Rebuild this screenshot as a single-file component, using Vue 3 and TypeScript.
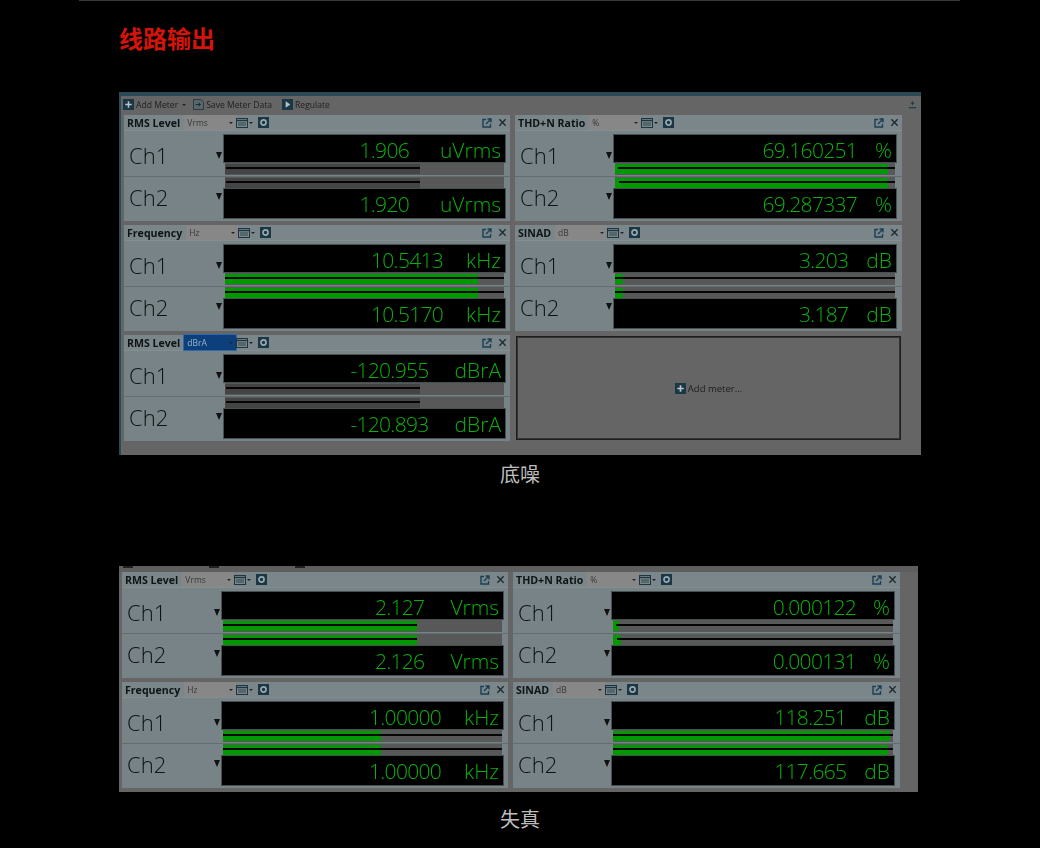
<script setup lang="ts">
interface Bar { fill: number; line: number; start: number; dim?: boolean }
interface Row { name: string; value: string; bar: Bar }
interface Meter { title: string; unit: string; sel: string; gap: number; active?: boolean; rows: [Row, Row] }

const row = (name: string, value: string, fill: number, line: number, start = 0, dim = false): Row => ({
  name, value, bar: { fill, line, start, dim },
})

const noise: Meter[] = [
  { title: 'RMS Level', unit: 'uVrms', sel: 'Vrms', gap: 31, rows: [row('Ch1', '1.906', 70, 70, 1, true), row('Ch2', '1.920', 70, 70, 1, true)] },
  { title: 'THD+N Ratio', unit: '%', sel: '%', gap: 18, rows: [row('Ch1', '69.160251', 97.5, 100, 3), row('Ch2', '69.287337', 97.5, 100, 4)] },
  { title: 'Frequency', unit: 'kHz', sel: 'Hz', gap: 23, rows: [row('Ch1', '10.5413', 90.7, 100), row('Ch2', '10.5170', 90.7, 100)] },
  { title: 'SINAD', unit: 'dB', sel: 'dB', gap: 18, rows: [row('Ch1', '3.203', 3, 100), row('Ch2', '3.187', 3, 100)] },
  { title: 'RMS Level', unit: 'dBrA', sel: 'dBrA', gap: 26, active: true, rows: [row('Ch1', '-120.955', 70, 70, 1, true), row('Ch2', '-120.893', 70, 70, 1, true)] },
]
const dist: Meter[] = [
  { title: 'RMS Level', unit: 'Vrms', sel: 'Vrms', gap: 26, rows: [row('Ch1', '2.127', 69.7, 69.7), row('Ch2', '2.126', 69.7, 69.7)] },
  { title: 'THD+N Ratio', unit: '%', sel: '%', gap: 17, rows: [row('Ch1', '0.000122', 2, 100, 3), row('Ch2', '0.000131', 3, 100, 4)] },
  { title: 'Frequency', unit: 'kHz', sel: 'Hz', gap: 23, rows: [row('Ch1', '1.00000', 56.6, 100), row('Ch2', '1.00000', 56.6, 100)] },
  { title: 'SINAD', unit: 'dB', sel: 'dB', gap: 18, rows: [row('Ch1', '118.251', 98.9, 100), row('Ch2', '117.665', 98.3, 100)] },
]
const groups = [
  { id: 'noise', meters: noise, caption: '底噪', add: true },
  { id: 'dist', meters: dist, caption: '失真', add: false },
]
</script>

<template>
  <div class="page">
    <div class="rule"></div>
    <h1 class="title">线路输出</h1>
    <section v-for="g in groups" :key="g.id" class="group" :class="g.id">
      <div class="shot">
        <div v-if="g.add" class="toolbar">
          <svg class="tb-ico" viewBox="0 0 12 12"><rect width="12" height="12" fill="#1b3746"/><path d="M6 2.500v7M2.500 6h7" stroke="#b9c4c8" stroke-width="1.600"/></svg>
          <span>Add Meter</span><i class="caret"></i>
          <svg class="tb-ico save" viewBox="0 0 12 12"><path d="M.5.5h8l3 3v8H.5z" fill="#59676b" stroke="#23343d"/><path d="M3 6h5M6 4l2 2-2 2" stroke="#10242e" fill="none"/></svg>
          <span>Save Meter Data</span>
          <svg class="tb-ico play" viewBox="0 0 12 12"><rect width="12" height="12" fill="#1b3746"/><path d="M4 2.500l5 3.500-5 3.500z" fill="#b9c4c8"/></svg>
          <span>Regulate</span>
          <svg class="tb-ico dl" viewBox="0 0 10 10"><path d="M5 1.500v4M3 3.500h4M1 8.500h8" stroke="#1f3c4c" stroke-width="1.200"/></svg>
        </div>
        <div v-else class="crop"><i></i><i></i><i></i></div>
        <div class="grid">
          <article v-for="(m, mi) in g.meters" :key="mi" class="meter">
            <header class="head">
              <b>{{ m.title }}</b>
              <span class="sel" :class="{ on: m.active }"><em>{{ m.sel }}</em><i class="caret"></i></span>
              <svg class="rom" viewBox="0 0 12 10"><rect x=".5" y=".5" width="11" height="9" fill="#7a8789" stroke="#1c3540"/><path d="M.5 2.500h11" stroke="#1c3540" stroke-width="1.400"/><path d="M2 5h8M2 7h8" stroke="#2f4650"/></svg>
              <i class="caret small"></i>
              <svg class="gear" viewBox="0 0 12 12"><rect width="12" height="12" fill="#1b3746"/><circle cx="6" cy="6" r="2.800" fill="none" stroke="#9aa9ad" stroke-width="1.800"/></svg>
              <svg class="pop" viewBox="0 0 10 10"><path d="M4 1.500H1v7.500h7.500V6" fill="none" stroke="#1a3f55" stroke-width="1.400"/><path d="M4 6l4.500-4.500M5.500 1h3.500v3.500" fill="none" stroke="#1a3f55" stroke-width="1.400"/></svg>
              <svg class="close" viewBox="0 0 10 10"><path d="M1.500 1.500l7 7M8.500 1.500l-7 7" stroke="#1d2b30" stroke-width="1.500"/></svg>
            </header>
            <div v-for="(r, ri) in m.rows" :key="r.name" class="row" :class="ri === 0 ? 'first' : 'second'">
              <div class="label"><span>{{ r.name }}</span><i class="tri"></i></div>
              <div class="read">
                <div class="display">
                  <span class="num">{{ r.value }}</span><span class="unit" :style="{ marginLeft: m.gap + 'px' }">{{ m.unit }}</span>
                </div>
                <div class="bar">
                  <div class="strip s1"><i :class="{ dim: r.bar.dim }" :style="{ width: r.bar.fill + '%' }"></i></div>
                  <div class="strip s2"><i :class="{ dim: r.bar.dim }" :style="{ width: r.bar.fill + '%' }"></i>
                    <u :style="{ left: r.bar.start + 'px', width: 'calc(' + r.bar.line + '% - ' + r.bar.start + 'px)' }"></u>
                  </div>
                  <div class="strip s3"><i :class="{ dim: r.bar.dim }" :style="{ width: r.bar.fill + '%' }"></i></div>
                </div>
              </div>
            </div>
          </article>
          <button v-if="g.add" class="add">
            <svg class="tb-ico" viewBox="0 0 12 12"><rect width="12" height="12" fill="#1b3746"/><path d="M6 2.500v7M2.500 6h7" stroke="#b9c4c8" stroke-width="1.800"/></svg>
            <span>Add meter...</span>
          </button>
        </div>
      </div>
      <p class="caption">{{ g.caption }}</p>
    </section>
  </div>
</template>

<style>
html, body { background: #000; margin: 0; }
</style>

<style scoped>
.page {
  width: 1040px;
  height: 848px;
  overflow: hidden;
  background: #000;
  font-family: "Open Sans", "Noto Sans CJK SC", sans-serif;
}
.rule { height: 1px; width: 881px; margin-left: 79px; background: #3a3a3a; }
.title {
  margin: 22px 0 0 119px;
  height: 30px;
  font: 700 24px/30px "Noto Sans CJK SC", sans-serif;
  color: #d4140a;
}
.group { margin-left: 119px; }
.group.noise { margin-top: 39px; }
.group.dist { margin-top: 79px; }
.shot {
  background: #656565;
  display: flex;
  flex-direction: column;
  filter: blur(0.35px);
}
.noise .shot {
  width: 800px;
  height: 359px;
  border-top: 4px solid #2b4a55;
  border-left: 2px solid #2b4a55;
}
.dist .shot {
  width: 799px;
  height: 226px;
  box-sizing: border-box;
  padding-left: 3px;
}
.toolbar {
  height: 17px;
  margin-left: 2px;
  display: flex;
  align-items: center;
  font-size: 8.6px;
  color: #1e1e1e;
  flex-shrink: 0;
}
.tb-ico { width: 11px; height: 11px; flex-shrink: 0; margin-right: 2px; }
.save { margin-left: 7px; }
.play { margin-left: 10px; }
.dl { margin-left: auto; margin-right: 4px; width: 9px; height: 9px; }
.caret {
  width: 0; height: 0;
  border: 2px solid transparent;
  border-top: 2.5px solid #222;
  border-bottom: 0;
  margin-left: 4px;
}
.crop {
  height: 6px;
  display: flex;
  gap: 76px;
  padding-left: 4px;
  box-sizing: border-box;
  margin: 0 0 0 -3px;
  background: #5e5e5e;
}
.crop i { display: block; width: 10px; height: 2px; background: #222; }
.grid {
  display: grid;
  grid-template-columns: 386px 387px;
  grid-auto-rows: 106px;
  column-gap: 5px;
  row-gap: 4px;
  margin-left: 3px;
  margin-top: 2px;
}
.dist .grid { margin-left: 0; margin-top: 0; }
.meter {
  background: #778386;
  display: flex;
  flex-direction: column;
}
.head {
  height: 16px;
  display: flex;
  align-items: center;
  padding-left: 3px;
  background: #7a8689;
  border-bottom: 1px solid #848f91;
  box-sizing: border-box;
  font-size: 10.6px;
  color: #0e1416;
}
.head b { font-weight: 700; margin-right: 4px; white-space: nowrap; }
.sel {
  width: 52px;
  height: 15px;
  background: #878787;
  display: flex;
  align-items: center;
  justify-content: space-between;
  box-sizing: border-box;
  padding: 0 3px;
  font-size: 8.5px;
  color: #343a3c;
  flex-shrink: 0;
}
.sel em { font-style: normal; }
.sel .caret { margin: 0; }
.sel.on { background: #0c3f7c; outline: 1px solid #2f6aa8; color: #9db4cf; }
.rom { width: 12px; height: 10px; flex-shrink: 0; }
.caret.small { margin-left: 1px; }
.gear { width: 11px; height: 11px; margin-left: 5px; flex-shrink: 0; }
.pop { width: 10px; height: 10px; margin-left: auto; flex-shrink: 0; }
.close { width: 9px; height: 9px; margin: 0 3px 0 6px; flex-shrink: 0; }
.row { display: flex; flex: 1; }
.row.first { border-bottom: 1px solid #626d6f; }
.label {
  width: 100px;
  flex-shrink: 0;
  display: flex;
  align-items: center;
  justify-content: space-between;
  padding: 0 2px 0 5px;
  box-sizing: border-box;
  font-size: 22px;
  font-weight: 300;
  color: #0d1214;
}
.meter:nth-child(even) .label { width: 99px; }
.first .label { padding-top: 4px; }
.second .label { padding-bottom: 4px; }
.tri {
  width: 0; height: 0;
  border: 3.5px solid transparent;
  border-top: 7px solid #111;
  border-bottom: 0;
}
.read { width: 281px; display: flex; flex-direction: column; }
.meter:nth-child(even) .read { width: 282px; }
.first .read { padding-top: 4px; }
.second .read { flex-direction: column-reverse; justify-content: flex-end; }
.display {
  height: 27px;
  background: #000;
  outline: 1px solid #465053;
  display: flex;
  justify-content: flex-end;
  align-items: center;
  padding: 2px 4px 0 0;
  box-sizing: border-box;
  font-size: 21px;
  font-weight: 300;
  color: #0cb00c;
  white-space: nowrap;
}
.num { letter-spacing: -0.7px; }
.second .display { height: 29px; }
.bar {
  height: 12px;
  margin: 1px 1px 0 1px;
  background: #585858;
  display: flex;
  flex-direction: column;
}
.second .bar { margin: 0 1px 0 1px; }
.strip { position: relative; display: flex; }
.s1 { height: 3px; margin-top: 1px; }
.s2 { height: 2px; }
.s3 { height: 5px; }
.strip i { display: block; background: #009a00; }
.strip i.dim { background: #444; }
.strip u { position: absolute; top: 0; height: 100%; background: #060606; }
.add {
  border: 1px solid #1e1e1e;
  outline: 1px solid #333;
  outline-offset: -2px;
  background: #656565;
  margin: 1px;
  font: 9.5px "Open Sans", sans-serif;
  color: #202020;
  display: flex;
  align-items: center;
  justify-content: center;
}
.caption {
  margin: 6px 0 0;
  width: 802px;
  height: 26px;
  text-align: center;
  font: 400 20px/26px "Noto Sans CJK SC", sans-serif;
  color: #bdbdbd;
}
.dist .caption { margin-top: 14px; }
</style>
